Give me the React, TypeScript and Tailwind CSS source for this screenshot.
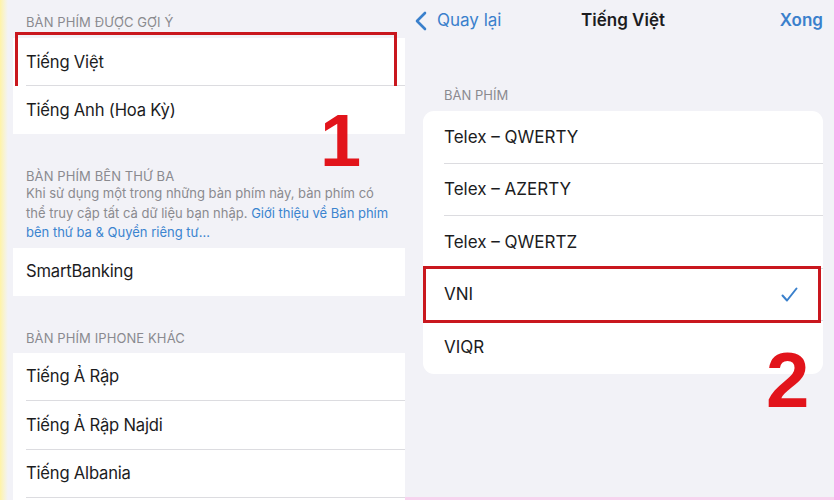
import type { ReactNode } from "react";

const LEFT_GROUPS = {
  suggested: ["Tiếng Việt", "Tiếng Anh (Hoa Kỳ)"],
  other: ["Tiếng Ả Rập", "Tiếng Ả Rập Najdi", "Tiếng Albania"],
};

const KEYBOARDS = ["Telex – QWERTY", "Telex – AZERTY", "Telex – QWERTZ", "VNI", "VIQR"];

function SectionHeader({ children }: { children: ReactNode }) {
  return (
    <div className="pl-[13px] text-[13px] leading-[16px] tracking-[0.1px] text-[#8a8a8f] uppercase">
      {children}
    </div>
  );
}

function Row({
  label,
  last,
  height,
  children,
}: {
  label: string;
  last?: boolean;
  height: string;
  children?: ReactNode;
}) {
  return (
    <div className={`relative flex items-center bg-white pl-[13px] ${height}`}>
      <span className="text-[16.6px] tracking-[-0.2px] text-[#1c1c1e]">{label}</span>
      {!last && <div className="absolute right-0 bottom-0 left-[13px] h-px bg-[#dcdce0]" />}
      {children}
    </div>
  );
}

function Check() {
  return (
    <svg width="17" height="16" viewBox="0 0 17 16" className="absolute right-[25px]">
      <path d="M1.5 8.5 L6 13.5 L15.5 1.5" fill="none" stroke="#3a80cc" strokeWidth="2" strokeLinecap="round" strokeLinejoin="round" />
    </svg>
  );
}

export default function App() {
  return (
    <div className="relative flex h-[500px] w-[840px] overflow-hidden bg-[#f2f2f7] font-['Inter',sans-serif]">
      {/* yellow edge */}
      <div className="w-[8px] shrink-0 bg-gradient-to-r from-[#fff3a6] to-[#f2f2f7]" />

      {/* left screen: keyboard list */}
      <div className="flex w-[397px] shrink-0 flex-col pl-[5px] pt-[14px]">
        <SectionHeader>Bàn phím được gợi ý</SectionHeader>
        <div className="mt-[8px] flex flex-col">
          {LEFT_GROUPS.suggested.map((label, i) => (
            <Row key={label} label={label} last={i === LEFT_GROUPS.suggested.length - 1} height="h-[48px]">
              {i === 0 && (
                <div className="absolute top-[-6px] right-[8px] bottom-[-3px] left-[2px] border-[3px] border-[#c9171e]" />
              )}
            </Row>
          ))}
        </div>

        <div className="mt-[34px]">
          <SectionHeader>Bàn phím bên thứ ba</SectionHeader>
        </div>
        <p className="pr-[8px] pl-[13px] text-[13px] leading-[19.5px] text-[#8a8a8f]">
          Khi sử dụng một trong những bàn phím này, bàn phím có thể truy cập tất cả dữ liệu bạn nhập.{" "}
          <span className="text-[#3b84cf]">Giới thiệu về Bàn phím bên thứ ba &amp; Quyền riêng tư...</span>
        </p>
        <div className="mt-[5px]">
          <Row label="SmartBanking" last height="h-[48px]" />
        </div>

        <div className="mt-[34px]">
          <SectionHeader>Bàn phím iPhone khác</SectionHeader>
        </div>
        <div className="mt-[7px] flex flex-col">
          {LEFT_GROUPS.other.map((label) => (
            <Row key={label} label={label} height="h-[48.5px]" />
          ))}
          <div className="h-[20px] bg-white" />
        </div>
      </div>

      {/* right screen: Tiếng Việt layouts */}
      <div className="flex flex-1 flex-col border-b-[3px] border-[#f7d3ee] pr-[11px] pl-[18px]">
        <div className="relative flex h-[42px] items-center justify-center">
          <div className="absolute left-[-8px] flex items-center gap-[10px] text-[17px] text-[#3a80cc]">
            <svg width="12" height="20" viewBox="0 0 12 20">
              <path d="M10 2 L2 10 L10 18" fill="none" stroke="#3a80cc" strokeWidth="2.6" strokeLinecap="round" strokeLinejoin="round" />
            </svg>
            <span>Quay lại</span>
          </div>
          <span className="text-[17px] font-semibold text-[#1c1c1e]">Tiếng Việt</span>
          <span className="absolute right-0 text-[17px] font-semibold text-[#3a80cc]">Xong</span>
        </div>

        <div className="mt-[45px] pl-[21px] text-[13px] leading-[16px] text-[#8a8a8f] uppercase">Bàn phím</div>
        <div className="mt-[8px] flex flex-col rounded-[11px] bg-white">
          {KEYBOARDS.map((label, i) => (
            <div key={label} className="relative flex h-[52.5px] items-center pl-[21px]">
              <span className="text-[17px] text-[#1c1c1e]">{label}</span>
              {i < KEYBOARDS.length - 1 && (
                <div className="absolute right-0 bottom-0 left-[21px] h-px bg-[#dcdce0]" />
              )}
              {label === "VNI" && (
                <>
                  <Check />
                  <div className="absolute top-[-3px] right-[2px] bottom-[-2px] left-0 border-[3px] border-[#c9171e]" />
                </>
              )}
            </div>
          ))}
        </div>
      </div>

      {/* pink edge */}
      <div className="w-[6px] shrink-0 bg-[#f8b2ee]" />

      {/* step numbers */}
      <span className="absolute top-[96px] left-[320px] font-['Liberation_Sans',sans-serif] text-[74px] leading-[90px] font-bold text-[#e2141b]">
        1
      </span>
      <span className="absolute top-[333px] left-[766px] font-['Liberation_Sans',sans-serif] text-[78px] leading-[94px] font-bold text-[#e2141b]">
        2
      </span>
    </div>
  );
}
